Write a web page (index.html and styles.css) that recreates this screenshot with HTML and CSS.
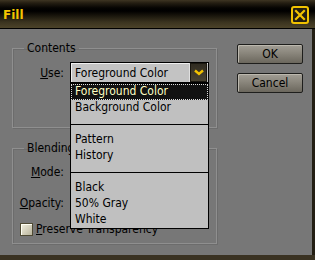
FILE: index.html
```html
<!DOCTYPE html>
<html>
<head>
<meta charset="utf-8">
<link rel="stylesheet" href="styles.css">
</head>
<body>
<div class="window">
  <div class="titlebar">
    <span class="title">Fill</span>
    <button class="close" aria-label="Close">
      <svg width="18" height="18" viewBox="0 0 18 18">
        <rect x="1" y="1" width="16" height="16" rx="2" fill="#221d12" stroke="#f2c200" stroke-width="2"/>
        <path d="M5 5 L13 13 M13 5 L5 13" stroke="#f2c200" stroke-width="2.2" stroke-linecap="square"/>
      </svg>
    </button>
  </div>
  <div class="body">
    <div class="left">
      <fieldset class="group contents">
        <legend>Contents</legend>
        <div class="row">
          <label class="lbl"><u>U</u>se:</label>
          <div class="select">
            <span class="value">Foreground Color</span>
            <span class="arrow">
              <svg width="10" height="7" viewBox="0 0 10 7"><path d="M1 1.5 L5 5 L9 1.5" fill="none" stroke="#f2c200" stroke-width="2.4"/></svg>
            </span>
          </div>
        </div>
      </fieldset>
      <fieldset class="group blending">
        <legend>Blending</legend>
        <div class="row"><label class="lbl"><u>M</u>ode:</label></div>
        <div class="row opacity"><label class="lbl"><u>O</u>pacity:</label></div>
        <div class="check"><span class="box"></span><span><u>P</u>reserve Transparency</span></div>
      </fieldset>
    </div>
    <div class="buttons">
      <button class="btn">OK</button>
      <button class="btn">Cancel</button>
    </div>
  </div>
  <ul class="list">
    <li class="item selected">Foreground Color</li>
    <li class="item">Background Color</li>
    <li class="sep"></li>
    <li class="item">Pattern</li>
    <li class="item">History</li>
    <li class="sep"></li>
    <li class="item">Black</li>
    <li class="item">50% Gray</li>
    <li class="item">White</li>
  </ul>
</div>
</body>
</html>
```
FILE: styles.css
```css
* { box-sizing: border-box; }
html, body { margin: 0; padding: 0; background: #3a3222; }
body {
  font-family: "DejaVu Sans Condensed", "DejaVu Sans", sans-serif;
  font-size: 12px;
  color: #000;
}
.window {
  position: relative;
  width: 315px;
  height: 260px;
  background: #3a3222;
  display: flex;
  flex-direction: column;
}
.titlebar {
  height: 29px;
  border-bottom: 1px solid #000;
  background: linear-gradient(to bottom, #3e3522 0px, #241e12 3px, #050402 8px, #000 11px, #15120a 15px, #3a331f 22px, #4c4329 28px);
  display: flex;
  align-items: center;
  justify-content: space-between;
  padding: 0 6px 0 3px;
}
.title {
  font-family: "DejaVu Sans", sans-serif;
  font-weight: bold;
  font-size: 12px;
  color: #f4c400;
  margin-top: 1px;
}
.close {
  width: 18px;
  height: 18px;
  padding: 0;
  border: 0;
  background: none;
  display: block;
  margin-top: 1px;
}
.close svg { display: block; }
.body {
  height: 226px;
  background: #777;
  border-right: 3px solid #231e13;
  display: flex;
}
.left {
  padding-left: 12px;
  width: 217px;
}
.group {
  margin: 0;
  padding: 0;
  border: 1px solid #8f8f8f;
  box-shadow: inset 1px 1px 0 #6c6c6c, 1px 1px 0 #6c6c6c;
  width: 205px;
}
.group legend {
  padding: 0 3px;
  margin-left: 11px;
  line-height: 13px;
  height: 13px;
}
.contents {
  margin-top: 13px;
  height: 86px;
  padding-top: 7px;
}
.blending {
  margin-top: 14px;
  height: 102px;
  padding-top: 6px;
}
.row {
  display: flex;
  align-items: center;
  height: 21px;
}
.opacity { margin-top: 10px; }
.lbl {
  width: 51px;
  text-align: right;
  margin-right: 6px;
}
.select {
  width: 139px;
  height: 21px;
  border: 1px solid #000;
  box-shadow: inset 1px 1px 0 #f0f0f0;
  background: #c3c3c3;
  display: flex;
  align-items: center;
  justify-content: space-between;
  padding-left: 4px;
}
.arrow {
  width: 18px;
  height: 19px;
  margin-right: 1px;
  border-left: 1px solid #e0e0e0;
  background: linear-gradient(to bottom, #2e2a20, #4a4434);
  display: flex;
  align-items: center;
  justify-content: center;
  box-shadow: inset 0 0 0 1px #1a1710;
}
.arrow svg { display: block; }
.check {
  display: flex;
  align-items: center;
  margin-top: 9px;
  padding-left: 7px;
  height: 14px;
}
.box {
  width: 13px;
  height: 13px;
  border: 1px solid #4f4a34;
  background: linear-gradient(135deg, #f2f0e0, #b9b49c);
  box-shadow: inset 1px 1px 0 #fffff4;
  margin-right: 3px;
}
.buttons {
  margin-left: 20px;
  padding-top: 15px;
  display: flex;
  flex-direction: column;
  gap: 9px;
}
.btn {
  width: 66px;
  height: 20px;
  border: 1px solid #1e1e1c;
  border-radius: 2px;
  background: linear-gradient(to bottom, #a29e95, #8a867c 45%, #6b675d);
  box-shadow: inset 1px 1px 0 #bcb8ae;
  font-family: "DejaVu Sans Condensed", "DejaVu Sans", sans-serif;
  font-size: 12px;
  color: #000;
  padding: 0;
}
.list {
  position: absolute;
  left: 70px;
  top: 83px;
  width: 139px;
  margin: 0;
  padding: 0;
  list-style: none;
  background: #c0c0c0;
  border: 1px solid #000;
}
.item {
  height: 16px;
  line-height: 15px;
  padding-left: 4px;
}
.item.selected {
  background: #111;
  color: #ffffc4;
  outline: 1px dotted #ddd;
  outline-offset: -1px;
}
.sep {
  height: 16px;
  display: flex;
  align-items: center;
}
.sep::before {
  content: "";
  display: block;
  width: 100%;
  border-top: 1px solid #000;
}
```
